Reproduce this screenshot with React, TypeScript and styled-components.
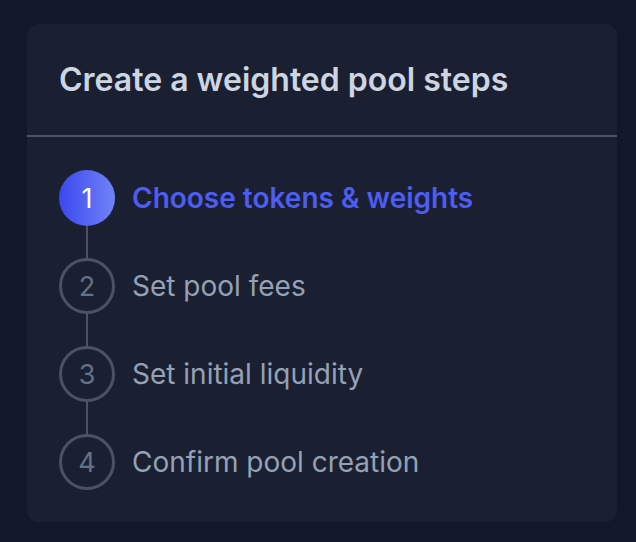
import React from "react";
import styled, { createGlobalStyle } from "styled-components";

const GlobalStyle = createGlobalStyle`
  html, body {
    margin: 0;
    padding: 0;
    background-color: #121729;
    font-family: Inter, "Noto Sans", "Liberation Sans", sans-serif;
  }
`;

const Page = styled.div`
  padding: 24px 19px 21px 27px;
`;

const Card = styled.section`
  background-color: #1a2031;
  border-radius: 12px;
  overflow: hidden;
`;

const Header = styled.header`
  display: flex;
  align-items: center;
  height: 111px;
  padding: 0 32px;
  border-bottom: 2px solid #4b5466;
`;

const Title = styled.h2`
  margin: 0;
  font-size: 32px;
  font-weight: 600;
  color: #cdd5e1;
`;

const StepList = styled.ol`
  list-style: none;
  margin: 0;
  padding: 33px 32px 32px;
  display: flex;
  flex-direction: column;
`;

const StepRow = styled.li`
  display: flex;
  align-items: center;
  gap: 17px;
  height: 56px;
`;

const Circle = styled.span<{ $active?: boolean }>`
  box-sizing: border-box;
  display: flex;
  align-items: center;
  justify-content: center;
  flex: none;
  width: 56px;
  height: 56px;
  border-radius: 50%;
  font-size: 27px;
  font-weight: 400;
  color: ${(p) => (p.$active ? "#ffffff" : "#657184")};
  background: ${(p) => (p.$active ? "linear-gradient(90deg, #3b47ef 0%, #7083f8 100%)" : "transparent")};
  border: ${(p) => (p.$active ? "none" : "3px solid #4a5364")};
`;

const StepLabel = styled.span<{ $active?: boolean }>`
  font-size: 28px;
  font-weight: ${(p) => (p.$active ? 600 : 400)};
  color: ${(p) => (p.$active ? "#4d5cf1" : "#95a1b4")};
`;

const Connector = styled.div`
  width: 2px;
  height: 32px;
  margin-left: 27px;
  background-color: #4a5364;
`;

const steps = ["Choose tokens & weights", "Set pool fees", "Set initial liquidity", "Confirm pool creation"];

const App: React.FC = () => {
  const current = 0;

  return (
    <Page>
      <GlobalStyle />
      <Card>
        <Header>
          <Title>Create a weighted pool steps</Title>
        </Header>
        <StepList>
          {steps.map((label, index) => (
            <React.Fragment key={label}>
              {index > 0 && <Connector />}
              <StepRow>
                <Circle $active={index === current}>{index + 1}</Circle>
                <StepLabel $active={index === current}>{label}</StepLabel>
              </StepRow>
            </React.Fragment>
          ))}
        </StepList>
      </Card>
    </Page>
  );
};

export default App;
